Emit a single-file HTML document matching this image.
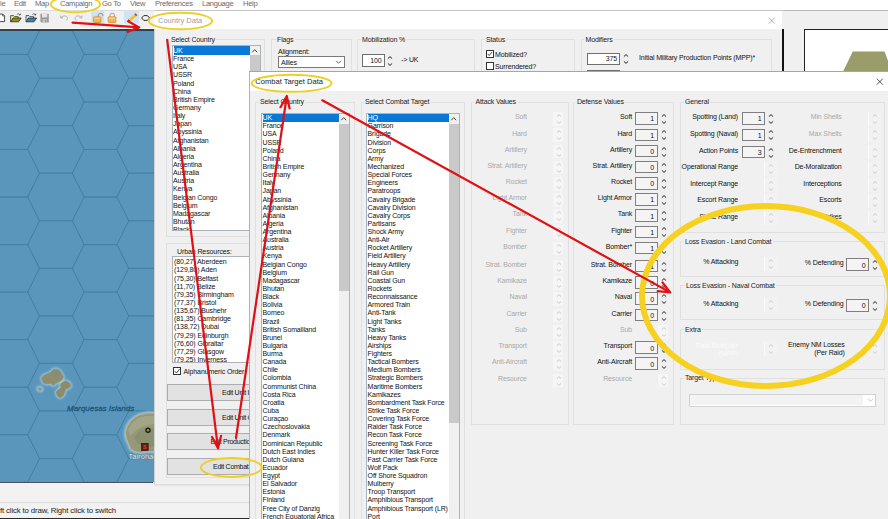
<!DOCTYPE html>
<html><head><meta charset="utf-8"><title>Editor</title>
<style>
html,body{margin:0;padding:0;}
body{width:888px;height:519px;overflow:hidden;position:relative;background:#fff;font-family:"Liberation Sans",sans-serif;font-size:7.0px;color:#111;letter-spacing:-0.14px;}
.b{position:absolute;box-sizing:border-box;}
.t{position:absolute;white-space:nowrap;line-height:10px;height:10px;}
.grp{border:1px solid #e0e0e0;box-shadow:0 0 0 0 #fff;}
.glab{background:#f0f0f0;padding:0 1.5px;color:#1a1a1a;}
.lb{background:#fff;border:1px solid #aeb3b9;}
.spin{background:#f4f4f4;border:1px solid #7f7f7f;}
.dis{color:#a9a9a9;}
.btn{background:#e2e2e2;border:1px solid #adadad;}
.menu{color:#6a6a6a;font-size:7.6px;letter-spacing:-0.3px;}
.urb{font-size:7px;letter-spacing:-0.1px;}
</style></head><body>

<span class="t menu" style="top:-0.80px;left:0.00px;">le</span>
<span class="t menu" style="top:-0.80px;left:14.00px;">Edit</span>
<span class="t menu" style="top:-0.80px;left:35.00px;">Map</span>
<span class="t menu" style="top:-0.80px;left:60.00px;">Campaign</span>
<span class="t menu" style="top:-0.80px;left:102.00px;">Go To</span>
<span class="t menu" style="top:-0.80px;left:130.00px;">View</span>
<span class="t menu" style="top:-0.80px;left:155.00px;">Preferences</span>
<span class="t menu" style="top:-0.80px;left:202.00px;">Language</span>
<span class="t menu" style="top:-0.80px;left:243.00px;">Help</span>
<div class="b " style="left:0.00px;top:10.00px;width:154.00px;height:19.40px;background:#f0f0f0;border-top:1px solid #dcdcdc;border-bottom:1px solid #fafafa"></div>
<svg class="b" style="left:0;top:10px" width="153" height="19" viewBox="0 10 153 19">
<rect x="91.3" y="11.2" width="13" height="12.3" fill="#cfe3f4"/><rect x="124" y="11.2" width="15" height="12.3" fill="#cfe3f4"/>
<path d="M-2 14 L2.6 14 L4.6 16 L4.6 21.6 L-2 21.6Z" fill="#fff" stroke="#222" stroke-width="0.8"/><path d="M2.6 14 L2.6 16 L4.6 16" fill="none" stroke="#222" stroke-width="0.6"/>
<path d="M10.6 21.8 L10.6 15.6 L13.6 15.6 L14.399999999999999 16.6 L18.2 16.6 L18.2 18" fill="#f0ea80" stroke="#222" stroke-width="0.7"/>
<path d="M10.6 21.8 L13.0 18 L21.2 18 L18.6 21.8Z" fill="#8f8f1c" stroke="#1a1a1a" stroke-width="0.7"/>
<path d="M16.8 14.6 C18.0 13.3 19.6 13.5 20.2 15 M20.5 13.6 L20.2 15.2 L18.799999999999997 14.8" fill="none" stroke="#333" stroke-width="0.6"/>
<path d="M26 21.8 L26 15.6 L29 15.6 L29.8 16.6 L33.6 16.6 L33.6 18" fill="#d8ebf5" stroke="#222" stroke-width="0.7"/>
<path d="M26 21.8 L28.4 18 L36.6 18 L34 21.8Z" fill="#4b7fa8" stroke="#1a1a1a" stroke-width="0.7"/>
<path d="M32.2 14.6 C33.4 13.3 35 13.5 35.6 15 M35.9 13.6 L35.6 15.2 L34.2 14.8" fill="none" stroke="#333" stroke-width="0.6"/>
<path d="M40.4 13.8 L48.8 13.8 L48.8 22.4 L41.4 22.4 L40.4 21.4Z" fill="#9b9b9b"/><rect x="42" y="13.8" width="5.2" height="3.6" fill="#e6e6e6"/><rect x="42.6" y="19.2" width="4.4" height="3.2" fill="#c9c9c9"/><rect x="45.2" y="19.8" width="1.1" height="2.2" fill="#8a8a8a"/>
<path d="M61 17.6 C63 15.4 66.4 15.4 67.4 17.6 C67.8 18.8 67.2 19.8 66 20.2 M60.6 15.6 L60.8 18 L63.2 17.8" fill="none" stroke="#a4a4a4" stroke-width="0.8"/>
<path d="M81.6 17.6 C79.6 15.4 76.2 15.4 75.2 17.6 C74.8 18.8 75.4 19.8 76.6 20.2 M82 15.6 L81.8 18 L79.4 17.8" fill="none" stroke="#a4a4a4" stroke-width="0.8"/>
<path d="M98.2 17 L98.2 15.4 C98.2 13 102.6 12.6 102.8 15.2 L102.8 16.2" fill="none" stroke="#9aa0a6" stroke-width="1.1"/>
<rect x="93.4" y="16.8" width="7.6" height="5.7" rx="0.8" fill="#f6b250" stroke="#d28a2c" stroke-width="0.7"/><rect x="94.2" y="17.6" width="6" height="1.6" fill="#fbd08a"/>
<path d="M110 17 L110 15.4 C110 12.6 114.4 12.6 114.4 15.4 L114.4 17" fill="none" stroke="#a9aeb3" stroke-width="1.1"/>
<rect x="108.1" y="16.8" width="7.8" height="5.7" rx="0.8" fill="#f6b250" stroke="#d28a2c" stroke-width="0.7"/><rect x="108.9" y="17.6" width="6.2" height="1.6" fill="#fbd08a"/>
<g transform="translate(127.7 21.6) rotate(-40)"><path d="M0 0 L2.4 -1.4 L2.4 1.4Z" fill="#3a2a1a"/><rect x="2.4" y="-1.4" width="7.4" height="2.8" fill="#f2b81e"/><rect x="2.4" y="-1.4" width="7.4" height="0.9" fill="#f8d660"/><rect x="9.8" y="-1.4" width="1.6" height="2.8" fill="#c23a28"/></g>
<path d="M141.6 18 L143.8 15.6 L147.4 15.6 L149.6 18 L147.4 20.4 L143.8 20.4Z" fill="none" stroke="#1a1a1a" stroke-width="0.9" stroke-linejoin="round"/>
</svg>
<svg class="b" style="left:0;top:30px" width="154" height="452" viewBox="0 30 154 452">
<defs><radialGradient id="sh" cx="50%" cy="50%" r="50%"><stop offset="55%" stop-color="#86b9cf" stop-opacity="0.9"/><stop offset="100%" stop-color="#5a95bb" stop-opacity="0"/></radialGradient><filter id="bl"><feGaussianBlur stdDeviation="1.2"/></filter><filter id="bl2"><feGaussianBlur stdDeviation="0.5"/></filter></defs>
<rect x="0" y="30" width="154" height="452" fill="#5a95bb"/>
<path d="M-61.5 6.9 L-49.7 -16.9 L-16.9 -16.9 L-5.1 6.9 L-16.9 30.6 L-49.7 30.6Z M-61.5 54.4 L-49.7 30.6 L-16.9 30.6 L-5.1 54.4 L-16.9 78.2 L-49.7 78.2Z M-61.5 101.9 L-49.7 78.2 L-16.9 78.2 L-5.1 101.9 L-16.9 125.7 L-49.7 125.7Z M-61.5 149.5 L-49.7 125.7 L-16.9 125.7 L-5.1 149.5 L-16.9 173.2 L-49.7 173.2Z M-61.5 197.0 L-49.7 173.2 L-16.9 173.2 L-5.1 197.0 L-16.9 220.8 L-49.7 220.8Z M-61.5 244.6 L-49.7 220.8 L-16.9 220.8 L-5.1 244.6 L-16.9 268.3 L-49.7 268.3Z M-61.5 292.1 L-49.7 268.3 L-16.9 268.3 L-5.1 292.1 L-16.9 315.9 L-49.7 315.9Z M-61.5 339.6 L-49.7 315.9 L-16.9 315.9 L-5.1 339.6 L-16.9 363.4 L-49.7 363.4Z M-61.5 387.2 L-49.7 363.4 L-16.9 363.4 L-5.1 387.2 L-16.9 410.9 L-49.7 410.9Z M-61.5 434.7 L-49.7 410.9 L-16.9 410.9 L-5.1 434.7 L-16.9 458.5 L-49.7 458.5Z M-61.5 482.3 L-49.7 458.5 L-16.9 458.5 L-5.1 482.3 L-16.9 506.0 L-49.7 506.0Z M-61.5 529.8 L-49.7 506.0 L-16.9 506.0 L-5.1 529.8 L-16.9 553.6 L-49.7 553.6Z M-16.9 30.6 L-5.1 6.9 L27.7 6.9 L39.5 30.6 L27.7 54.4 L-5.1 54.4Z M-16.9 78.2 L-5.1 54.4 L27.7 54.4 L39.5 78.2 L27.7 101.9 L-5.1 101.9Z M-16.9 125.7 L-5.1 101.9 L27.7 101.9 L39.5 125.7 L27.7 149.5 L-5.1 149.5Z M-16.9 173.2 L-5.1 149.5 L27.7 149.5 L39.5 173.2 L27.7 197.0 L-5.1 197.0Z M-16.9 220.8 L-5.1 197.0 L27.7 197.0 L39.5 220.8 L27.7 244.6 L-5.1 244.6Z M-16.9 268.3 L-5.1 244.6 L27.7 244.6 L39.5 268.3 L27.7 292.1 L-5.1 292.1Z M-16.9 315.9 L-5.1 292.1 L27.7 292.1 L39.5 315.9 L27.7 339.6 L-5.1 339.6Z M-16.9 363.4 L-5.1 339.6 L27.7 339.6 L39.5 363.4 L27.7 387.2 L-5.1 387.2Z M-16.9 410.9 L-5.1 387.2 L27.7 387.2 L39.5 410.9 L27.7 434.7 L-5.1 434.7Z M-16.9 458.5 L-5.1 434.7 L27.7 434.7 L39.5 458.5 L27.7 482.3 L-5.1 482.3Z M-16.9 506.0 L-5.1 482.3 L27.7 482.3 L39.5 506.0 L27.7 529.8 L-5.1 529.8Z M-16.9 553.6 L-5.1 529.8 L27.7 529.8 L39.5 553.6 L27.7 577.3 L-5.1 577.3Z M27.7 6.9 L39.5 -16.9 L72.3 -16.9 L84.1 6.9 L72.3 30.6 L39.5 30.6Z M27.7 54.4 L39.5 30.6 L72.3 30.6 L84.1 54.4 L72.3 78.2 L39.5 78.2Z M27.7 101.9 L39.5 78.2 L72.3 78.2 L84.1 101.9 L72.3 125.7 L39.5 125.7Z M27.7 149.5 L39.5 125.7 L72.3 125.7 L84.1 149.5 L72.3 173.2 L39.5 173.2Z M27.7 197.0 L39.5 173.2 L72.3 173.2 L84.1 197.0 L72.3 220.8 L39.5 220.8Z M27.7 244.6 L39.5 220.8 L72.3 220.8 L84.1 244.6 L72.3 268.3 L39.5 268.3Z M27.7 292.1 L39.5 268.3 L72.3 268.3 L84.1 292.1 L72.3 315.9 L39.5 315.9Z M27.7 339.6 L39.5 315.9 L72.3 315.9 L84.1 339.6 L72.3 363.4 L39.5 363.4Z M27.7 387.2 L39.5 363.4 L72.3 363.4 L84.1 387.2 L72.3 410.9 L39.5 410.9Z M27.7 434.7 L39.5 410.9 L72.3 410.9 L84.1 434.7 L72.3 458.5 L39.5 458.5Z M27.7 482.3 L39.5 458.5 L72.3 458.5 L84.1 482.3 L72.3 506.0 L39.5 506.0Z M27.7 529.8 L39.5 506.0 L72.3 506.0 L84.1 529.8 L72.3 553.6 L39.5 553.6Z M72.3 30.6 L84.1 6.9 L116.9 6.9 L128.7 30.6 L116.9 54.4 L84.1 54.4Z M72.3 78.2 L84.1 54.4 L116.9 54.4 L128.7 78.2 L116.9 101.9 L84.1 101.9Z M72.3 125.7 L84.1 101.9 L116.9 101.9 L128.7 125.7 L116.9 149.5 L84.1 149.5Z M72.3 173.2 L84.1 149.5 L116.9 149.5 L128.7 173.2 L116.9 197.0 L84.1 197.0Z M72.3 220.8 L84.1 197.0 L116.9 197.0 L128.7 220.8 L116.9 244.6 L84.1 244.6Z M72.3 268.3 L84.1 244.6 L116.9 244.6 L128.7 268.3 L116.9 292.1 L84.1 292.1Z M72.3 315.9 L84.1 292.1 L116.9 292.1 L128.7 315.9 L116.9 339.6 L84.1 339.6Z M72.3 363.4 L84.1 339.6 L116.9 339.6 L128.7 363.4 L116.9 387.2 L84.1 387.2Z M72.3 410.9 L84.1 387.2 L116.9 387.2 L128.7 410.9 L116.9 434.7 L84.1 434.7Z M72.3 458.5 L84.1 434.7 L116.9 434.7 L128.7 458.5 L116.9 482.3 L84.1 482.3Z M72.3 506.0 L84.1 482.3 L116.9 482.3 L128.7 506.0 L116.9 529.8 L84.1 529.8Z M72.3 553.6 L84.1 529.8 L116.9 529.8 L128.7 553.6 L116.9 577.3 L84.1 577.3Z M116.9 6.9 L128.7 -16.9 L161.5 -16.9 L173.3 6.9 L161.5 30.6 L128.7 30.6Z M116.9 54.4 L128.7 30.6 L161.5 30.6 L173.3 54.4 L161.5 78.2 L128.7 78.2Z M116.9 101.9 L128.7 78.2 L161.5 78.2 L173.3 101.9 L161.5 125.7 L128.7 125.7Z M116.9 149.5 L128.7 125.7 L161.5 125.7 L173.3 149.5 L161.5 173.2 L128.7 173.2Z M116.9 197.0 L128.7 173.2 L161.5 173.2 L173.3 197.0 L161.5 220.8 L128.7 220.8Z M116.9 244.6 L128.7 220.8 L161.5 220.8 L173.3 244.6 L161.5 268.3 L128.7 268.3Z M116.9 292.1 L128.7 268.3 L161.5 268.3 L173.3 292.1 L161.5 315.9 L128.7 315.9Z M116.9 339.6 L128.7 315.9 L161.5 315.9 L173.3 339.6 L161.5 363.4 L128.7 363.4Z M116.9 387.2 L128.7 363.4 L161.5 363.4 L173.3 387.2 L161.5 410.9 L128.7 410.9Z M116.9 434.7 L128.7 410.9 L161.5 410.9 L173.3 434.7 L161.5 458.5 L128.7 458.5Z M116.9 482.3 L128.7 458.5 L161.5 458.5 L173.3 482.3 L161.5 506.0 L128.7 506.0Z M116.9 529.8 L128.7 506.0 L161.5 506.0 L173.3 529.8 L161.5 553.6 L128.7 553.6Z M161.5 30.6 L173.3 6.9 L206.1 6.9 L217.9 30.6 L206.1 54.4 L173.3 54.4Z M161.5 78.2 L173.3 54.4 L206.1 54.4 L217.9 78.2 L206.1 101.9 L173.3 101.9Z M161.5 125.7 L173.3 101.9 L206.1 101.9 L217.9 125.7 L206.1 149.5 L173.3 149.5Z M161.5 173.2 L173.3 149.5 L206.1 149.5 L217.9 173.2 L206.1 197.0 L173.3 197.0Z M161.5 220.8 L173.3 197.0 L206.1 197.0 L217.9 220.8 L206.1 244.6 L173.3 244.6Z M161.5 268.3 L173.3 244.6 L206.1 244.6 L217.9 268.3 L206.1 292.1 L173.3 292.1Z M161.5 315.9 L173.3 292.1 L206.1 292.1 L217.9 315.9 L206.1 339.6 L173.3 339.6Z M161.5 363.4 L173.3 339.6 L206.1 339.6 L217.9 363.4 L206.1 387.2 L173.3 387.2Z M161.5 410.9 L173.3 387.2 L206.1 387.2 L217.9 410.9 L206.1 434.7 L173.3 434.7Z M161.5 458.5 L173.3 434.7 L206.1 434.7 L217.9 458.5 L206.1 482.3 L173.3 482.3Z M161.5 506.0 L173.3 482.3 L206.1 482.3 L217.9 506.0 L206.1 529.8 L173.3 529.8Z M161.5 553.6 L173.3 529.8 L206.1 529.8 L217.9 553.6 L206.1 577.3 L173.3 577.3Z" fill="none" stroke="#3d7ba4" stroke-width="0.55"/>
<g filter="url(#bl)" fill="#a9d3e2" stroke="#a9d3e2" stroke-width="3" stroke-linejoin="round" opacity="0.85"><path d="M41.5 378.3 L43.9 375.4 L47.7 373.8 L51.0 372.3 L53.2 369.6 L56.5 369.2 L59.4 370.5 L61.6 373.6 L63.4 377.1 L61.6 380.2 L58.1 382.0 L55.4 383.8 L53.2 385.6 L50.6 383.3 L47.0 383.8 L43.5 382.9Z"/><path d="M62.1 382.7 L65.4 381.1 L69.2 382.7 L70.9 386.0 L68.1 388.2 L65.6 388.7 L64.7 391.8 L63.0 395.8 L59.9 397.7 L57.2 395.3 L56.3 391.8 L58.5 389.6 L61.2 388.2 L60.5 385.1Z"/><path d="M37.7 388.2 L39.9 387.3 L42.1 388.7 L41.5 390.4 L38.8 390.4Z"/><path d="M156.2 413.0 L147.4 413.0 L140.7 414.4 L135.2 417.0 L130.3 421.4 L126.8 427.0 L125.4 432.5 L126.3 438.7 L128.5 443.6 L130.7 449.1 L135.2 451.6 L140.7 452.5 L147.4 451.6 L156.2 451.6Z"/></g>
<g filter="url(#bl2)" stroke-linejoin="round"><path d="M41.5 378.3 L43.9 375.4 L47.7 373.8 L51.0 372.3 L53.2 369.6 L56.5 369.2 L59.4 370.5 L61.6 373.6 L63.4 377.1 L61.6 380.2 L58.1 382.0 L55.4 383.8 L53.2 385.6 L50.6 383.3 L47.0 383.8 L43.5 382.9Z" fill="#8f8e6b" stroke="#8f8e6b" stroke-width="0.8"/><path d="M62.1 382.7 L65.4 381.1 L69.2 382.7 L70.9 386.0 L68.1 388.2 L65.6 388.7 L64.7 391.8 L63.0 395.8 L59.9 397.7 L57.2 395.3 L56.3 391.8 L58.5 389.6 L61.2 388.2 L60.5 385.1Z" fill="#8f8a68" stroke="#8f8a68" stroke-width="0.8"/><path d="M37.7 388.2 L39.9 387.3 L42.1 388.7 L41.5 390.4 L38.8 390.4Z" fill="#96946f"/>
<path d="M52 371 L57 370 L60 374 L58 378 L53 377Z" fill="#7f8a82" opacity="0.6"/>
<path d="M156.2 413.0 L147.4 413.0 L140.7 414.4 L135.2 417.0 L130.3 421.4 L126.8 427.0 L125.4 432.5 L126.3 438.7 L128.5 443.6 L130.7 449.1 L135.2 451.6 L140.7 452.5 L147.4 451.6 L156.2 451.6Z" fill="#97987a" stroke="#b4b59a" stroke-width="1"/><path d="M131 424 L138 418 L146 416 L154 416 L154 424 L144 426 L136 430 L130 436 L128 430Z" fill="#a9aa8c" opacity="0.7"/><path d="M138 432 L146 428 L154 428 L154 446 L146 448 L138 444 L134 438Z" fill="#7d8a66" opacity="0.5"/></g>
<circle cx="148" cy="430.3" r="2.7" fill="#1a1a12"/><circle cx="148" cy="430.3" r="1.3" fill="#a8903a"/>
<rect x="141.4" y="443.4" width="6.8" height="7.2" fill="#5e1a16" stroke="#2f0c0a" stroke-width="0.6"/><text x="144.8" y="449.2" font-size="5.4" fill="#e2483a" text-anchor="middle" font-family="Liberation Sans" font-weight="bold" letter-spacing="0">S</text>
<text x="128.4" y="459" font-size="7.4" fill="#eef2f3" stroke="#46545c" stroke-width="0.4" paint-order="stroke" font-family="Liberation Sans" letter-spacing="0.1">Tairohae</text>
<text x="67" y="411" font-size="8" font-style="italic" fill="#1b587a" stroke="#1b587a" stroke-width="0.3" font-family="Liberation Sans" letter-spacing="0">Marquesas Islands</text>
</svg>
<div class="b " style="left:0.00px;top:29.20px;width:154.00px;height:1.60px;background:#34414d"></div>
<div class="b " style="left:0.00px;top:481.60px;width:153.00px;height:1.40px;background:#4a5560"></div>
<div class="b " style="left:0.00px;top:483.00px;width:260.00px;height:19.50px;background:#f2f2f2"></div>
<div class="b " style="left:0.00px;top:502.00px;width:260.00px;height:17.00px;background:#f2f2f2;border-top:1px solid #dddddd"></div>
<div class="b " style="left:0.00px;top:517.80px;width:249.00px;height:1.20px;background:#2a2a2a"></div>
<div class="b " style="left:153.70px;top:484.00px;width:95.30px;height:3.00px;background:linear-gradient(#d9d9d9,#f2f2f2)"></div>
<span class="t " style="top:505.60px;left:0.00px;font-size:7.8px;color:#222;">ft click to draw, Right click to switch</span>
<div class="b " style="left:782.00px;top:10.00px;width:106.00px;height:62.00px;background:#f0f0f0;border-top:1px solid #b9b9b9"></div>
<div class="b " style="left:804.00px;top:28.50px;width:96.00px;height:51.50px;background:#fff;border:1.2px solid #222"></div>
<svg class="b" style="left:840px;top:50px" width="48" height="22" viewBox="840 50 48 22"><path d="M852.8 51.4 L884.6 51.4 L892 72 L842.8 72Z" fill="#9a9c69"/></svg>
<div class="b " style="left:153.70px;top:10.00px;width:629.30px;height:474.00px;background:#f0f0f0;border-top:1px solid #c4c4c4;border-left:1px solid #d0d0d0"></div>
<div class="b " style="left:154.40px;top:11.00px;width:627.60px;height:18.40px;background:#fff"></div>
<div class="b " style="left:782.00px;top:29.40px;width:2.00px;height:42.60px;background:#111"></div>
<span class="t " style="top:15.90px;left:158.00px;font-size:7.5px;color:#9d9d9d;letter-spacing:0;">Country Data</span>
<svg class="b" style="left:767px;top:16px" width="10" height="10" viewBox="0 0 10 10"><path d="M1.8 1.6 L7.8 7.6 M7.8 1.6 L1.8 7.6" stroke="#9a9a9a" stroke-width="0.8" fill="none"/></svg>
<div class="b grp" style="left:166.00px;top:39.40px;width:98.50px;height:197.60px;"></div>
<span class="t glab" style="left:169.50px;top:35.20px;">Select Country</span>
<div class="b lb" style="left:171.50px;top:45.00px;width:89.00px;height:185.50px;"></div>
<div class="b" style="left:172.50px;top:46.00px;width:87.00px;height:183.50px;overflow:hidden">
<div class="b" style="left:1px;top:0.42px;width:76.50px;height:8.15px;background:#0a78d6"></div>
<span class="t " style="left:0.6px;top:-0.10px;color:#fff;">UK</span>
<span class="t " style="left:0.6px;top:8.05px;">France</span>
<span class="t " style="left:0.6px;top:16.20px;">USA</span>
<span class="t " style="left:0.6px;top:24.35px;">USSR</span>
<span class="t " style="left:0.6px;top:32.50px;">Poland</span>
<span class="t " style="left:0.6px;top:40.65px;">China</span>
<span class="t " style="left:0.6px;top:48.80px;">British Empire</span>
<span class="t " style="left:0.6px;top:56.95px;">Germany</span>
<span class="t " style="left:0.6px;top:65.10px;">Italy</span>
<span class="t " style="left:0.6px;top:73.25px;">Japan</span>
<span class="t " style="left:0.6px;top:81.40px;">Abyssinia</span>
<span class="t " style="left:0.6px;top:89.55px;">Afghanistan</span>
<span class="t " style="left:0.6px;top:97.70px;">Albania</span>
<span class="t " style="left:0.6px;top:105.85px;">Algeria</span>
<span class="t " style="left:0.6px;top:114.00px;">Argentina</span>
<span class="t " style="left:0.6px;top:122.15px;">Australia</span>
<span class="t " style="left:0.6px;top:130.30px;">Austria</span>
<span class="t " style="left:0.6px;top:138.45px;">Kenya</span>
<span class="t " style="left:0.6px;top:146.60px;">Belgian Congo</span>
<span class="t " style="left:0.6px;top:154.75px;">Belgium</span>
<span class="t " style="left:0.6px;top:162.90px;">Madagascar</span>
<span class="t " style="left:0.6px;top:171.05px;">Bhutan</span>
<span class="t " style="left:0.6px;top:179.20px;">Black</span>
</div>
<div class="b " style="left:250.00px;top:46.00px;width:9.50px;height:183.50px;background:#f0f0f0"></div>
<div class="b " style="left:250.00px;top:54.50px;width:9.50px;height:25.50px;background:#c9c9c9"></div>
<svg class="b" style="left:250.00px;top:46.00px" width="9.5" height="10" viewBox="0 0 9.5 10"><path d="M2.35 6.2 L4.75 3.6 L7.15 6.2" fill="none" stroke="#444" stroke-width="1"/></svg>
<div class="b grp" style="left:271.00px;top:39.40px;width:80.50px;height:80.60px;"></div>
<span class="t glab" style="left:275.50px;top:35.20px;">Flags</span>
<span class="t " style="top:47.20px;left:278.00px;">Alignment:</span>
<div class="b " style="left:277.50px;top:56.00px;width:67.50px;height:12.30px;background:#fff;border:1px solid #7a7a7a"></div>
<span class="t " style="top:57.80px;left:281.00px;">Allies</span>
<svg class="b" style="left:334px;top:58px" width="9" height="8" viewBox="0 0 9 8"><path d="M2 2.8 L4.5 5.3 L7 2.8" fill="none" stroke="#444" stroke-width="0.8"/></svg>
<div class="b grp" style="left:357.00px;top:39.40px;width:117.50px;height:80.60px;"></div>
<span class="t glab" style="left:360.50px;top:35.20px;">Mobilization %</span>
<div class="b " style="left:362.00px;top:54.00px;width:22.50px;height:12.70px;background:#fff;border:1px solid #6e6e6e"></div>
<span class="t " style="top:56.10px;right:506.50px;">100</span>
<svg class="b" style="left:384.50px;top:53.50px" width="10" height="14" viewBox="-5 -7 10 14"><path d="M-2.1 -2.4 L0 -4.4 L2.1 -2.4 M-2.1 2.4 L0 4.4 L2.1 2.4" fill="none" stroke="#222" stroke-width="1.0" stroke-linejoin="round"/></svg>
<span class="t " style="top:54.60px;left:401.00px;">-&gt; UK</span>
<div class="b grp" style="left:480.50px;top:39.40px;width:94.50px;height:80.60px;"></div>
<span class="t glab" style="left:484.50px;top:35.20px;">Status</span>
<div class="b " style="left:486.00px;top:50.20px;width:7.60px;height:7.60px;background:#fff;border:1px solid #333"></div>
<svg class="b" style="left:486px;top:50.2px" width="7.6" height="7.6" viewBox="0 0 8 8"><path d="M1.7 4.1 L3.3 5.8 L6.4 2.2" fill="none" stroke="#222" stroke-width="0.9"/></svg>
<span class="t " style="top:49.60px;left:495.00px;">Mobilized?</span>
<div class="b " style="left:486.00px;top:62.20px;width:7.60px;height:7.60px;background:#fff;border:1px solid #333"></div>
<span class="t " style="top:62.00px;left:495.00px;">Surrendered?</span>
<div class="b grp" style="left:581.00px;top:39.40px;width:191.00px;height:80.60px;"></div>
<span class="t glab" style="left:584.00px;top:35.20px;">Modifiers</span>
<div class="b " style="left:587.00px;top:52.50px;width:33.00px;height:12.00px;background:#fff;border:1px solid #6e6e6e"></div>
<span class="t " style="top:54.20px;right:271.00px;">375</span>
<svg class="b" style="left:620.50px;top:51.50px" width="10" height="14" viewBox="-5 -7 10 14"><path d="M-2.1 -2.4 L0 -4.4 L2.1 -2.4 M-2.1 2.4 L0 4.4 L2.1 2.4" fill="none" stroke="#222" stroke-width="1.0" stroke-linejoin="round"/></svg>
<span class="t " style="top:53.40px;left:639.00px;">Initial Military Production Points (MPP)*</span>
<div class="b " style="left:587.00px;top:69.50px;width:33.00px;height:2.50px;background:#fff;border:1px solid #6e6e6e"></div>
<div class="b grp" style="left:166.00px;top:242.80px;width:98.50px;height:235.20px;"></div>
<span class="t urb" style="top:246.60px;left:177.00px;">Urban Resources:</span>
<div class="b lb" style="left:171.50px;top:256.00px;width:92.50px;height:106.80px;"></div>
<div class="b" style="left:172.50px;top:257.00px;width:90.50px;height:104.80px;overflow:hidden">
<span class="t urb" style="left:1.6px;top:0.20px;">(80,27) Aberdeen</span>
<span class="t urb" style="left:1.6px;top:8.35px;">(129,80) Aden</span>
<span class="t urb" style="left:1.6px;top:16.50px;">(75,30) Belfast</span>
<span class="t urb" style="left:1.6px;top:24.65px;">(11,70) Belize</span>
<span class="t urb" style="left:1.6px;top:32.80px;">(79,35) Birmingham</span>
<span class="t urb" style="left:1.6px;top:40.95px;">(77,37) Bristol</span>
<span class="t urb" style="left:1.6px;top:49.10px;">(135,67) Bushehr</span>
<span class="t urb" style="left:1.6px;top:57.25px;">(81,35) Cambridge</span>
<span class="t urb" style="left:1.6px;top:65.40px;">(138,72) Dubai</span>
<span class="t urb" style="left:1.6px;top:73.55px;">(79,29) Edinburgh</span>
<span class="t urb" style="left:1.6px;top:81.70px;">(76,60) Gibraltar</span>
<span class="t urb" style="left:1.6px;top:89.85px;">(77,29) Glasgow</span>
<span class="t urb" style="left:1.6px;top:98.00px;">(79,25) Inverness</span>
</div>
<div class="b " style="left:173.00px;top:367.00px;width:8.20px;height:8.20px;background:#fff;border:1px solid #333"></div>
<svg class="b" style="left:173px;top:367px" width="8.2" height="8.2" viewBox="0 0 8 8"><path d="M1.7 4.1 L3.3 5.8 L6.4 2.2" fill="none" stroke="#222" stroke-width="0.9"/></svg>
<span class="t urb" style="top:366.80px;left:183.50px;">Alphanumeric Order</span>
<div class="b btn" style="left:167.00px;top:384.30px;width:133.00px;height:17.20px;"></div>
<span class="t urb" style="top:388.30px;left:222.00px;letter-spacing:-0.28px;">Edit Unit I</span>
<div class="b btn" style="left:167.00px;top:408.80px;width:133.00px;height:17.20px;"></div>
<span class="t urb" style="top:412.80px;left:222.00px;letter-spacing:-0.28px;">Edit Unit C</span>
<div class="b btn" style="left:167.00px;top:433.20px;width:133.00px;height:17.20px;"></div>
<span class="t urb" style="top:437.20px;left:210.40px;letter-spacing:-0.28px;">Edit Production</span>
<div class="b btn" style="left:167.00px;top:457.80px;width:133.00px;height:17.20px;"></div>
<span class="t urb" style="top:461.80px;left:213.00px;letter-spacing:-0.28px;">Edit Combat</span>
<div class="b " style="left:248.50px;top:71.00px;width:639.50px;height:448.00px;background:#f0f0f0;border-top:1px solid #7fb0dc;border-left:1px solid #8fbbe0"></div>
<div class="b " style="left:249.50px;top:72.00px;width:638.50px;height:19.00px;background:#fff"></div>
<span class="t " style="top:76.60px;left:255.20px;font-size:7.6px;color:#1a1a1a;letter-spacing:0;">Combat Target Data</span>
<svg class="b" style="left:875px;top:77px" width="10" height="10" viewBox="0 0 10 10"><path d="M1.8 1.6 L7.9 7.7 M7.9 1.6 L1.8 7.7" stroke="#333" stroke-width="0.85" fill="none"/></svg>
<div class="b grp" style="left:255.00px;top:101.60px;width:100.40px;height:428.40px;"></div>
<span class="t glab" style="left:258.50px;top:97.40px;">Select Country</span>
<div class="b lb" style="left:261.00px;top:112.80px;width:88.70px;height:417.20px;"></div>
<div class="b" style="left:262.00px;top:113.80px;width:86.70px;height:415.20px;overflow:hidden">
<div class="b" style="left:1px;top:-0.07px;width:76.20px;height:8.13px;background:#0a78d6"></div>
<span class="t " style="left:0.6px;top:-0.60px;color:#fff;">UK</span>
<span class="t " style="left:0.6px;top:7.53px;">France</span>
<span class="t " style="left:0.6px;top:15.67px;">USA</span>
<span class="t " style="left:0.6px;top:23.80px;">USSR</span>
<span class="t " style="left:0.6px;top:31.93px;">Poland</span>
<span class="t " style="left:0.6px;top:40.06px;">China</span>
<span class="t " style="left:0.6px;top:48.20px;">British Empire</span>
<span class="t " style="left:0.6px;top:56.33px;">Germany</span>
<span class="t " style="left:0.6px;top:64.46px;">Italy</span>
<span class="t " style="left:0.6px;top:72.60px;">Japan</span>
<span class="t " style="left:0.6px;top:80.73px;">Abyssinia</span>
<span class="t " style="left:0.6px;top:88.86px;">Afghanistan</span>
<span class="t " style="left:0.6px;top:97.00px;">Albania</span>
<span class="t " style="left:0.6px;top:105.13px;">Algeria</span>
<span class="t " style="left:0.6px;top:113.26px;">Argentina</span>
<span class="t " style="left:0.6px;top:121.39px;">Australia</span>
<span class="t " style="left:0.6px;top:129.53px;">Austria</span>
<span class="t " style="left:0.6px;top:137.66px;">Kenya</span>
<span class="t " style="left:0.6px;top:145.79px;">Belgian Congo</span>
<span class="t " style="left:0.6px;top:153.93px;">Belgium</span>
<span class="t " style="left:0.6px;top:162.06px;">Madagascar</span>
<span class="t " style="left:0.6px;top:170.19px;">Bhutan</span>
<span class="t " style="left:0.6px;top:178.33px;">Black</span>
<span class="t " style="left:0.6px;top:186.46px;">Bolivia</span>
<span class="t " style="left:0.6px;top:194.59px;">Borneo</span>
<span class="t " style="left:0.6px;top:202.72px;">Brazil</span>
<span class="t " style="left:0.6px;top:210.86px;">British Somaliland</span>
<span class="t " style="left:0.6px;top:218.99px;">Brunei</span>
<span class="t " style="left:0.6px;top:227.12px;">Bulgaria</span>
<span class="t " style="left:0.6px;top:235.26px;">Burma</span>
<span class="t " style="left:0.6px;top:243.39px;">Canada</span>
<span class="t " style="left:0.6px;top:251.52px;">Chile</span>
<span class="t " style="left:0.6px;top:259.66px;">Colombia</span>
<span class="t " style="left:0.6px;top:267.79px;">Communist China</span>
<span class="t " style="left:0.6px;top:275.92px;">Costa Rica</span>
<span class="t " style="left:0.6px;top:284.06px;">Croatia</span>
<span class="t " style="left:0.6px;top:292.19px;">Cuba</span>
<span class="t " style="left:0.6px;top:300.32px;">Curaçao</span>
<span class="t " style="left:0.6px;top:308.45px;">Czechoslovakia</span>
<span class="t " style="left:0.6px;top:316.59px;">Denmark</span>
<span class="t " style="left:0.6px;top:324.72px;">Dominican Republic</span>
<span class="t " style="left:0.6px;top:332.85px;">Dutch East Indies</span>
<span class="t " style="left:0.6px;top:340.99px;">Dutch Guiana</span>
<span class="t " style="left:0.6px;top:349.12px;">Ecuador</span>
<span class="t " style="left:0.6px;top:357.25px;">Egypt</span>
<span class="t " style="left:0.6px;top:365.38px;">El Salvador</span>
<span class="t " style="left:0.6px;top:373.52px;">Estonia</span>
<span class="t " style="left:0.6px;top:381.65px;">Finland</span>
<span class="t " style="left:0.6px;top:389.78px;">Free City of Danzig</span>
<span class="t " style="left:0.6px;top:397.92px;">French Equatorial Africa</span>
</div>
<div class="b " style="left:339.20px;top:113.80px;width:9.50px;height:415.20px;background:#f0f0f0"></div>
<div class="b " style="left:339.20px;top:124.40px;width:9.50px;height:166.60px;background:#c9c9c9"></div>
<svg class="b" style="left:339.20px;top:113.80px" width="9.5" height="10" viewBox="0 0 9.5 10"><path d="M2.35 6.2 L4.75 3.6 L7.15 6.2" fill="none" stroke="#444" stroke-width="1"/></svg>
<div class="b grp" style="left:360.80px;top:101.60px;width:104.20px;height:428.40px;"></div>
<span class="t glab" style="left:363.50px;top:97.40px;">Select Combat Target</span>
<div class="b lb" style="left:366.00px;top:112.80px;width:93.50px;height:417.20px;"></div>
<div class="b" style="left:367.00px;top:113.80px;width:91.50px;height:415.20px;overflow:hidden">
<div class="b" style="left:1px;top:-0.07px;width:81.00px;height:8.13px;background:#0a78d6"></div>
<span class="t " style="left:0.6px;top:-0.60px;color:#fff;">HQ</span>
<span class="t " style="left:0.6px;top:7.53px;">Garrison</span>
<span class="t " style="left:0.6px;top:15.67px;">Brigade</span>
<span class="t " style="left:0.6px;top:23.80px;">Division</span>
<span class="t " style="left:0.6px;top:31.93px;">Corps</span>
<span class="t " style="left:0.6px;top:40.06px;">Army</span>
<span class="t " style="left:0.6px;top:48.20px;">Mechanized</span>
<span class="t " style="left:0.6px;top:56.33px;">Special Forces</span>
<span class="t " style="left:0.6px;top:64.46px;">Engineers</span>
<span class="t " style="left:0.6px;top:72.60px;">Paratroops</span>
<span class="t " style="left:0.6px;top:80.73px;">Cavalry Brigade</span>
<span class="t " style="left:0.6px;top:88.86px;">Cavalry Division</span>
<span class="t " style="left:0.6px;top:97.00px;">Cavalry Corps</span>
<span class="t " style="left:0.6px;top:105.13px;">Partisans</span>
<span class="t " style="left:0.6px;top:113.26px;">Shock Army</span>
<span class="t " style="left:0.6px;top:121.39px;">Anti-Air</span>
<span class="t " style="left:0.6px;top:129.53px;">Rocket Artillery</span>
<span class="t " style="left:0.6px;top:137.66px;">Field Artillery</span>
<span class="t " style="left:0.6px;top:145.79px;">Heavy Artillery</span>
<span class="t " style="left:0.6px;top:153.93px;">Rail Gun</span>
<span class="t " style="left:0.6px;top:162.06px;">Coastal Gun</span>
<span class="t " style="left:0.6px;top:170.19px;">Rockets</span>
<span class="t " style="left:0.6px;top:178.33px;">Reconnaissance</span>
<span class="t " style="left:0.6px;top:186.46px;">Armored Train</span>
<span class="t " style="left:0.6px;top:194.59px;">Anti-Tank</span>
<span class="t " style="left:0.6px;top:202.72px;">Light Tanks</span>
<span class="t " style="left:0.6px;top:210.86px;">Tanks</span>
<span class="t " style="left:0.6px;top:218.99px;">Heavy Tanks</span>
<span class="t " style="left:0.6px;top:227.12px;">Airships</span>
<span class="t " style="left:0.6px;top:235.26px;">Fighters</span>
<span class="t " style="left:0.6px;top:243.39px;">Tactical Bombers</span>
<span class="t " style="left:0.6px;top:251.52px;">Medium Bombers</span>
<span class="t " style="left:0.6px;top:259.66px;">Strategic Bombers</span>
<span class="t " style="left:0.6px;top:267.79px;">Maritime Bombers</span>
<span class="t " style="left:0.6px;top:275.92px;">Kamikazes</span>
<span class="t " style="left:0.6px;top:284.06px;">Bombardment Task Force</span>
<span class="t " style="left:0.6px;top:292.19px;">Strike Task Force</span>
<span class="t " style="left:0.6px;top:300.32px;">Covering Task Force</span>
<span class="t " style="left:0.6px;top:308.45px;">Raider Task Force</span>
<span class="t " style="left:0.6px;top:316.59px;">Recon Task Force</span>
<span class="t " style="left:0.6px;top:324.72px;">Screening Task Force</span>
<span class="t " style="left:0.6px;top:332.85px;">Hunter Killer Task Force</span>
<span class="t " style="left:0.6px;top:340.99px;">Fast Carrier Task Force</span>
<span class="t " style="left:0.6px;top:349.12px;">Wolf Pack</span>
<span class="t " style="left:0.6px;top:357.25px;">Off Shore Squadron</span>
<span class="t " style="left:0.6px;top:365.38px;">Mulberry</span>
<span class="t " style="left:0.6px;top:373.52px;">Troop Transport</span>
<span class="t " style="left:0.6px;top:381.65px;">Amphibious Transport</span>
<span class="t " style="left:0.6px;top:389.78px;">Amphibious Transport (LR)</span>
<span class="t " style="left:0.6px;top:397.92px;">Port</span>
</div>
<div class="b " style="left:449.00px;top:113.80px;width:9.50px;height:415.20px;background:#f0f0f0"></div>
<div class="b " style="left:449.00px;top:124.40px;width:9.50px;height:298.60px;background:#c9c9c9"></div>
<svg class="b" style="left:449.00px;top:113.80px" width="9.5" height="10" viewBox="0 0 9.5 10"><path d="M2.35 6.2 L4.75 3.6 L7.15 6.2" fill="none" stroke="#444" stroke-width="1"/></svg>
<div class="b grp" style="left:470.60px;top:101.60px;width:98.00px;height:323.00px;"></div>
<span class="t glab" style="left:474.00px;top:97.40px;">Attack Values</span>
<div class="b grp" style="left:572.80px;top:101.60px;width:101.60px;height:323.00px;"></div>
<span class="t glab" style="left:575.40px;top:97.40px;">Defense Values</span>
<span class="t dis" style="top:112.00px;right:361.20px;">Soft</span>
<div class="b " style="left:553.20px;top:111.80px;width:10.20px;height:13.80px;background:#f6f6f6"></div>
<svg class="b" style="left:553.50px;top:111.80px" width="10" height="14" viewBox="-5 -7 10 14"><path d="M-2.1 -2.4 L0 -4.4 L2.1 -2.4 M-2.1 2.4 L0 4.4 L2.1 2.4" fill="none" stroke="#bebebe" stroke-width="0.8" stroke-linejoin="round"/></svg>
<span class="t " style="top:112.00px;right:256.00px;">Soft</span>
<div class="b spin" style="left:635.40px;top:112.00px;width:22.20px;height:12.60px;"></div>
<span class="t " style="top:114.30px;right:234.00px;">1</span>
<svg class="b" style="left:658.50px;top:111.80px" width="10" height="14" viewBox="-5 -7 10 14"><path d="M-2.1 -2.4 L0 -4.4 L2.1 -2.4 M-2.1 2.4 L0 4.4 L2.1 2.4" fill="none" stroke="#222" stroke-width="1.0" stroke-linejoin="round"/></svg>
<span class="t dis" style="top:128.50px;right:361.20px;">Hard</span>
<div class="b " style="left:553.20px;top:128.30px;width:10.20px;height:13.80px;background:#f6f6f6"></div>
<svg class="b" style="left:553.50px;top:128.30px" width="10" height="14" viewBox="-5 -7 10 14"><path d="M-2.1 -2.4 L0 -4.4 L2.1 -2.4 M-2.1 2.4 L0 4.4 L2.1 2.4" fill="none" stroke="#bebebe" stroke-width="0.8" stroke-linejoin="round"/></svg>
<span class="t " style="top:128.50px;right:256.00px;">Hard</span>
<div class="b spin" style="left:635.40px;top:128.50px;width:22.20px;height:12.60px;"></div>
<span class="t " style="top:130.80px;right:234.00px;">1</span>
<svg class="b" style="left:658.50px;top:128.30px" width="10" height="14" viewBox="-5 -7 10 14"><path d="M-2.1 -2.4 L0 -4.4 L2.1 -2.4 M-2.1 2.4 L0 4.4 L2.1 2.4" fill="none" stroke="#222" stroke-width="1.0" stroke-linejoin="round"/></svg>
<span class="t dis" style="top:144.70px;right:361.20px;">Artillery</span>
<div class="b " style="left:553.20px;top:144.50px;width:10.20px;height:13.80px;background:#f6f6f6"></div>
<svg class="b" style="left:553.50px;top:144.50px" width="10" height="14" viewBox="-5 -7 10 14"><path d="M-2.1 -2.4 L0 -4.4 L2.1 -2.4 M-2.1 2.4 L0 4.4 L2.1 2.4" fill="none" stroke="#bebebe" stroke-width="0.8" stroke-linejoin="round"/></svg>
<span class="t " style="top:144.70px;right:256.00px;">Artillery</span>
<div class="b spin" style="left:635.40px;top:144.70px;width:22.20px;height:12.60px;"></div>
<span class="t " style="top:147.00px;right:234.00px;">0</span>
<svg class="b" style="left:658.50px;top:144.50px" width="10" height="14" viewBox="-5 -7 10 14"><path d="M-2.1 -2.4 L0 -4.4 L2.1 -2.4 M-2.1 2.4 L0 4.4 L2.1 2.4" fill="none" stroke="#222" stroke-width="1.0" stroke-linejoin="round"/></svg>
<span class="t dis" style="top:160.90px;right:361.20px;">Strat. Artillery</span>
<div class="b " style="left:553.20px;top:160.70px;width:10.20px;height:13.80px;background:#f6f6f6"></div>
<svg class="b" style="left:553.50px;top:160.70px" width="10" height="14" viewBox="-5 -7 10 14"><path d="M-2.1 -2.4 L0 -4.4 L2.1 -2.4 M-2.1 2.4 L0 4.4 L2.1 2.4" fill="none" stroke="#bebebe" stroke-width="0.8" stroke-linejoin="round"/></svg>
<span class="t " style="top:160.90px;right:256.00px;">Strat. Artillery</span>
<div class="b spin" style="left:635.40px;top:160.90px;width:22.20px;height:12.60px;"></div>
<span class="t " style="top:163.20px;right:234.00px;">0</span>
<svg class="b" style="left:658.50px;top:160.70px" width="10" height="14" viewBox="-5 -7 10 14"><path d="M-2.1 -2.4 L0 -4.4 L2.1 -2.4 M-2.1 2.4 L0 4.4 L2.1 2.4" fill="none" stroke="#222" stroke-width="1.0" stroke-linejoin="round"/></svg>
<span class="t dis" style="top:177.00px;right:361.20px;">Rocket</span>
<div class="b " style="left:553.20px;top:176.80px;width:10.20px;height:13.80px;background:#f6f6f6"></div>
<svg class="b" style="left:553.50px;top:176.80px" width="10" height="14" viewBox="-5 -7 10 14"><path d="M-2.1 -2.4 L0 -4.4 L2.1 -2.4 M-2.1 2.4 L0 4.4 L2.1 2.4" fill="none" stroke="#bebebe" stroke-width="0.8" stroke-linejoin="round"/></svg>
<span class="t " style="top:177.00px;right:256.00px;">Rocket</span>
<div class="b spin" style="left:635.40px;top:177.00px;width:22.20px;height:12.60px;"></div>
<span class="t " style="top:179.30px;right:234.00px;">0</span>
<svg class="b" style="left:658.50px;top:176.80px" width="10" height="14" viewBox="-5 -7 10 14"><path d="M-2.1 -2.4 L0 -4.4 L2.1 -2.4 M-2.1 2.4 L0 4.4 L2.1 2.4" fill="none" stroke="#222" stroke-width="1.0" stroke-linejoin="round"/></svg>
<span class="t dis" style="top:193.10px;right:361.20px;">Light Armor</span>
<div class="b " style="left:553.20px;top:192.90px;width:10.20px;height:13.80px;background:#f6f6f6"></div>
<svg class="b" style="left:553.50px;top:192.90px" width="10" height="14" viewBox="-5 -7 10 14"><path d="M-2.1 -2.4 L0 -4.4 L2.1 -2.4 M-2.1 2.4 L0 4.4 L2.1 2.4" fill="none" stroke="#bebebe" stroke-width="0.8" stroke-linejoin="round"/></svg>
<span class="t " style="top:193.10px;right:256.00px;">Light Armor</span>
<div class="b spin" style="left:635.40px;top:193.10px;width:22.20px;height:12.60px;"></div>
<span class="t " style="top:195.40px;right:234.00px;">1</span>
<svg class="b" style="left:658.50px;top:192.90px" width="10" height="14" viewBox="-5 -7 10 14"><path d="M-2.1 -2.4 L0 -4.4 L2.1 -2.4 M-2.1 2.4 L0 4.4 L2.1 2.4" fill="none" stroke="#222" stroke-width="1.0" stroke-linejoin="round"/></svg>
<span class="t dis" style="top:209.30px;right:361.20px;">Tank</span>
<div class="b " style="left:553.20px;top:209.10px;width:10.20px;height:13.80px;background:#f6f6f6"></div>
<svg class="b" style="left:553.50px;top:209.10px" width="10" height="14" viewBox="-5 -7 10 14"><path d="M-2.1 -2.4 L0 -4.4 L2.1 -2.4 M-2.1 2.4 L0 4.4 L2.1 2.4" fill="none" stroke="#bebebe" stroke-width="0.8" stroke-linejoin="round"/></svg>
<span class="t " style="top:209.30px;right:256.00px;">Tank</span>
<div class="b spin" style="left:635.40px;top:209.30px;width:22.20px;height:12.60px;"></div>
<span class="t " style="top:211.60px;right:234.00px;">1</span>
<svg class="b" style="left:658.50px;top:209.10px" width="10" height="14" viewBox="-5 -7 10 14"><path d="M-2.1 -2.4 L0 -4.4 L2.1 -2.4 M-2.1 2.4 L0 4.4 L2.1 2.4" fill="none" stroke="#222" stroke-width="1.0" stroke-linejoin="round"/></svg>
<span class="t dis" style="top:225.60px;right:361.20px;">Fighter</span>
<div class="b " style="left:553.20px;top:225.40px;width:10.20px;height:13.80px;background:#f6f6f6"></div>
<svg class="b" style="left:553.50px;top:225.40px" width="10" height="14" viewBox="-5 -7 10 14"><path d="M-2.1 -2.4 L0 -4.4 L2.1 -2.4 M-2.1 2.4 L0 4.4 L2.1 2.4" fill="none" stroke="#bebebe" stroke-width="0.8" stroke-linejoin="round"/></svg>
<span class="t " style="top:225.60px;right:256.00px;">Fighter</span>
<div class="b spin" style="left:635.40px;top:225.60px;width:22.20px;height:12.60px;"></div>
<span class="t " style="top:227.90px;right:234.00px;">1</span>
<svg class="b" style="left:658.50px;top:225.40px" width="10" height="14" viewBox="-5 -7 10 14"><path d="M-2.1 -2.4 L0 -4.4 L2.1 -2.4 M-2.1 2.4 L0 4.4 L2.1 2.4" fill="none" stroke="#222" stroke-width="1.0" stroke-linejoin="round"/></svg>
<span class="t dis" style="top:241.90px;right:361.20px;">Bomber</span>
<div class="b " style="left:553.20px;top:241.70px;width:10.20px;height:13.80px;background:#f6f6f6"></div>
<svg class="b" style="left:553.50px;top:241.70px" width="10" height="14" viewBox="-5 -7 10 14"><path d="M-2.1 -2.4 L0 -4.4 L2.1 -2.4 M-2.1 2.4 L0 4.4 L2.1 2.4" fill="none" stroke="#bebebe" stroke-width="0.8" stroke-linejoin="round"/></svg>
<span class="t " style="top:241.90px;right:256.00px;">Bomber*</span>
<div class="b spin" style="left:635.40px;top:241.90px;width:22.20px;height:12.60px;"></div>
<span class="t " style="top:244.20px;right:234.00px;">1</span>
<svg class="b" style="left:658.50px;top:241.70px" width="10" height="14" viewBox="-5 -7 10 14"><path d="M-2.1 -2.4 L0 -4.4 L2.1 -2.4 M-2.1 2.4 L0 4.4 L2.1 2.4" fill="none" stroke="#222" stroke-width="1.0" stroke-linejoin="round"/></svg>
<span class="t dis" style="top:259.90px;right:361.20px;">Strat. Bomber</span>
<div class="b " style="left:553.20px;top:259.70px;width:10.20px;height:13.80px;background:#f6f6f6"></div>
<svg class="b" style="left:553.50px;top:259.70px" width="10" height="14" viewBox="-5 -7 10 14"><path d="M-2.1 -2.4 L0 -4.4 L2.1 -2.4 M-2.1 2.4 L0 4.4 L2.1 2.4" fill="none" stroke="#bebebe" stroke-width="0.8" stroke-linejoin="round"/></svg>
<span class="t " style="top:259.90px;right:256.00px;">Strat. Bomber</span>
<div class="b spin" style="left:635.40px;top:259.90px;width:22.20px;height:12.60px;"></div>
<span class="t " style="top:262.20px;right:234.00px;">1</span>
<svg class="b" style="left:658.50px;top:259.70px" width="10" height="14" viewBox="-5 -7 10 14"><path d="M-2.1 -2.4 L0 -4.4 L2.1 -2.4 M-2.1 2.4 L0 4.4 L2.1 2.4" fill="none" stroke="#222" stroke-width="1.0" stroke-linejoin="round"/></svg>
<span class="t dis" style="top:276.20px;right:361.20px;">Kamikaze</span>
<div class="b " style="left:553.20px;top:276.00px;width:10.20px;height:13.80px;background:#f6f6f6"></div>
<svg class="b" style="left:553.50px;top:276.00px" width="10" height="14" viewBox="-5 -7 10 14"><path d="M-2.1 -2.4 L0 -4.4 L2.1 -2.4 M-2.1 2.4 L0 4.4 L2.1 2.4" fill="none" stroke="#bebebe" stroke-width="0.8" stroke-linejoin="round"/></svg>
<span class="t " style="top:276.20px;right:256.00px;">Kamikaze</span>
<div class="b spin" style="left:635.40px;top:276.20px;width:22.20px;height:12.60px;"></div>
<span class="t " style="top:278.50px;right:234.00px;">0</span>
<svg class="b" style="left:658.50px;top:276.00px" width="10" height="14" viewBox="-5 -7 10 14"><path d="M-2.1 -2.4 L0 -4.4 L2.1 -2.4 M-2.1 2.4 L0 4.4 L2.1 2.4" fill="none" stroke="#222" stroke-width="1.0" stroke-linejoin="round"/></svg>
<span class="t dis" style="top:292.40px;right:361.20px;">Naval</span>
<div class="b " style="left:553.20px;top:292.20px;width:10.20px;height:13.80px;background:#f6f6f6"></div>
<svg class="b" style="left:553.50px;top:292.20px" width="10" height="14" viewBox="-5 -7 10 14"><path d="M-2.1 -2.4 L0 -4.4 L2.1 -2.4 M-2.1 2.4 L0 4.4 L2.1 2.4" fill="none" stroke="#bebebe" stroke-width="0.8" stroke-linejoin="round"/></svg>
<span class="t " style="top:292.40px;right:256.00px;">Naval</span>
<div class="b spin" style="left:635.40px;top:292.40px;width:22.20px;height:12.60px;"></div>
<span class="t " style="top:294.70px;right:234.00px;">0</span>
<svg class="b" style="left:658.50px;top:292.20px" width="10" height="14" viewBox="-5 -7 10 14"><path d="M-2.1 -2.4 L0 -4.4 L2.1 -2.4 M-2.1 2.4 L0 4.4 L2.1 2.4" fill="none" stroke="#222" stroke-width="1.0" stroke-linejoin="round"/></svg>
<span class="t dis" style="top:308.80px;right:361.20px;">Carrier</span>
<div class="b " style="left:553.20px;top:308.60px;width:10.20px;height:13.80px;background:#f6f6f6"></div>
<svg class="b" style="left:553.50px;top:308.60px" width="10" height="14" viewBox="-5 -7 10 14"><path d="M-2.1 -2.4 L0 -4.4 L2.1 -2.4 M-2.1 2.4 L0 4.4 L2.1 2.4" fill="none" stroke="#bebebe" stroke-width="0.8" stroke-linejoin="round"/></svg>
<span class="t " style="top:308.80px;right:256.00px;">Carrier</span>
<div class="b spin" style="left:635.40px;top:308.80px;width:22.20px;height:12.60px;"></div>
<span class="t " style="top:311.10px;right:234.00px;">0</span>
<svg class="b" style="left:658.50px;top:308.60px" width="10" height="14" viewBox="-5 -7 10 14"><path d="M-2.1 -2.4 L0 -4.4 L2.1 -2.4 M-2.1 2.4 L0 4.4 L2.1 2.4" fill="none" stroke="#222" stroke-width="1.0" stroke-linejoin="round"/></svg>
<span class="t dis" style="top:325.10px;right:361.20px;">Sub</span>
<div class="b " style="left:553.20px;top:324.90px;width:10.20px;height:13.80px;background:#f6f6f6"></div>
<svg class="b" style="left:553.50px;top:324.90px" width="10" height="14" viewBox="-5 -7 10 14"><path d="M-2.1 -2.4 L0 -4.4 L2.1 -2.4 M-2.1 2.4 L0 4.4 L2.1 2.4" fill="none" stroke="#bebebe" stroke-width="0.8" stroke-linejoin="round"/></svg>
<span class="t dis" style="top:325.10px;right:256.00px;">Sub</span>
<div class="b " style="left:658.40px;top:324.90px;width:10.00px;height:13.80px;background:#f6f6f6"></div>
<svg class="b" style="left:658.50px;top:324.90px" width="10" height="14" viewBox="-5 -7 10 14"><path d="M-2.1 -2.4 L0 -4.4 L2.1 -2.4 M-2.1 2.4 L0 4.4 L2.1 2.4" fill="none" stroke="#bebebe" stroke-width="0.8" stroke-linejoin="round"/></svg>
<span class="t dis" style="top:341.20px;right:361.20px;">Transport</span>
<div class="b " style="left:553.20px;top:341.00px;width:10.20px;height:13.80px;background:#f6f6f6"></div>
<svg class="b" style="left:553.50px;top:341.00px" width="10" height="14" viewBox="-5 -7 10 14"><path d="M-2.1 -2.4 L0 -4.4 L2.1 -2.4 M-2.1 2.4 L0 4.4 L2.1 2.4" fill="none" stroke="#bebebe" stroke-width="0.8" stroke-linejoin="round"/></svg>
<span class="t " style="top:341.20px;right:256.00px;">Transport</span>
<div class="b spin" style="left:635.40px;top:341.20px;width:22.20px;height:12.60px;"></div>
<span class="t " style="top:343.50px;right:234.00px;">0</span>
<svg class="b" style="left:658.50px;top:341.00px" width="10" height="14" viewBox="-5 -7 10 14"><path d="M-2.1 -2.4 L0 -4.4 L2.1 -2.4 M-2.1 2.4 L0 4.4 L2.1 2.4" fill="none" stroke="#222" stroke-width="1.0" stroke-linejoin="round"/></svg>
<span class="t dis" style="top:357.40px;right:361.20px;">Anti-Aircraft</span>
<div class="b " style="left:553.20px;top:357.20px;width:10.20px;height:13.80px;background:#f6f6f6"></div>
<svg class="b" style="left:553.50px;top:357.20px" width="10" height="14" viewBox="-5 -7 10 14"><path d="M-2.1 -2.4 L0 -4.4 L2.1 -2.4 M-2.1 2.4 L0 4.4 L2.1 2.4" fill="none" stroke="#bebebe" stroke-width="0.8" stroke-linejoin="round"/></svg>
<span class="t " style="top:357.40px;right:256.00px;">Anti-Aircraft</span>
<div class="b spin" style="left:635.40px;top:357.40px;width:22.20px;height:12.60px;"></div>
<span class="t " style="top:359.70px;right:234.00px;">0</span>
<svg class="b" style="left:658.50px;top:357.20px" width="10" height="14" viewBox="-5 -7 10 14"><path d="M-2.1 -2.4 L0 -4.4 L2.1 -2.4 M-2.1 2.4 L0 4.4 L2.1 2.4" fill="none" stroke="#222" stroke-width="1.0" stroke-linejoin="round"/></svg>
<span class="t dis" style="top:373.80px;right:361.20px;">Resource</span>
<div class="b " style="left:553.20px;top:373.60px;width:10.20px;height:13.80px;background:#f6f6f6"></div>
<svg class="b" style="left:553.50px;top:373.60px" width="10" height="14" viewBox="-5 -7 10 14"><path d="M-2.1 -2.4 L0 -4.4 L2.1 -2.4 M-2.1 2.4 L0 4.4 L2.1 2.4" fill="none" stroke="#bebebe" stroke-width="0.8" stroke-linejoin="round"/></svg>
<span class="t dis" style="top:373.80px;right:256.00px;">Resource</span>
<div class="b " style="left:658.40px;top:373.60px;width:10.00px;height:13.80px;background:#f6f6f6"></div>
<svg class="b" style="left:658.50px;top:373.60px" width="10" height="14" viewBox="-5 -7 10 14"><path d="M-2.1 -2.4 L0 -4.4 L2.1 -2.4 M-2.1 2.4 L0 4.4 L2.1 2.4" fill="none" stroke="#bebebe" stroke-width="0.8" stroke-linejoin="round"/></svg>
<div class="b grp" style="left:679.60px;top:101.60px;width:205.70px;height:131.00px;"></div>
<span class="t glab" style="left:683.50px;top:97.40px;">General</span>
<span class="t " style="top:112.10px;right:150.00px;">Spotting (Land)</span>
<div class="b spin" style="left:742.40px;top:112.10px;width:22.40px;height:12.60px;"></div>
<span class="t " style="top:114.40px;right:126.50px;">1</span>
<svg class="b" style="left:766.00px;top:111.90px" width="10" height="14" viewBox="-5 -7 10 14"><path d="M-2.1 -2.4 L0 -4.4 L2.1 -2.4 M-2.1 2.4 L0 4.4 L2.1 2.4" fill="none" stroke="#222" stroke-width="1.0" stroke-linejoin="round"/></svg>
<span class="t " style="top:128.50px;right:150.00px;">Spotting (Naval)</span>
<div class="b spin" style="left:742.40px;top:128.50px;width:22.40px;height:12.60px;"></div>
<span class="t " style="top:130.80px;right:126.50px;">1</span>
<svg class="b" style="left:766.00px;top:128.30px" width="10" height="14" viewBox="-5 -7 10 14"><path d="M-2.1 -2.4 L0 -4.4 L2.1 -2.4 M-2.1 2.4 L0 4.4 L2.1 2.4" fill="none" stroke="#222" stroke-width="1.0" stroke-linejoin="round"/></svg>
<span class="t " style="top:145.70px;right:150.00px;">Action Points</span>
<div class="b spin" style="left:742.40px;top:145.70px;width:22.40px;height:12.60px;"></div>
<span class="t " style="top:148.00px;right:126.50px;">3</span>
<svg class="b" style="left:766.00px;top:145.50px" width="10" height="14" viewBox="-5 -7 10 14"><path d="M-2.1 -2.4 L0 -4.4 L2.1 -2.4 M-2.1 2.4 L0 4.4 L2.1 2.4" fill="none" stroke="#222" stroke-width="1.0" stroke-linejoin="round"/></svg>
<span class="t " style="top:162.20px;right:150.00px;">Operational Range</span>
<div class="b " style="left:764.00px;top:161.60px;width:13.00px;height:14.00px;background:#f2f2f2;border-left:1px solid #fafafa"></div>
<svg class="b" style="left:766.00px;top:162.00px" width="10" height="14" viewBox="-5 -7 10 14"><path d="M-2.1 -2.4 L0 -4.4 L2.1 -2.4 M-2.1 2.4 L0 4.4 L2.1 2.4" fill="none" stroke="#bebebe" stroke-width="0.8" stroke-linejoin="round"/></svg>
<span class="t " style="top:178.70px;right:150.00px;">Intercept Range</span>
<div class="b " style="left:764.00px;top:178.10px;width:13.00px;height:14.00px;background:#f2f2f2;border-left:1px solid #fafafa"></div>
<svg class="b" style="left:766.00px;top:178.50px" width="10" height="14" viewBox="-5 -7 10 14"><path d="M-2.1 -2.4 L0 -4.4 L2.1 -2.4 M-2.1 2.4 L0 4.4 L2.1 2.4" fill="none" stroke="#bebebe" stroke-width="0.8" stroke-linejoin="round"/></svg>
<span class="t " style="top:195.00px;right:150.00px;">Escort Range</span>
<div class="b " style="left:764.00px;top:194.40px;width:13.00px;height:14.00px;background:#f2f2f2;border-left:1px solid #fafafa"></div>
<svg class="b" style="left:766.00px;top:194.80px" width="10" height="14" viewBox="-5 -7 10 14"><path d="M-2.1 -2.4 L0 -4.4 L2.1 -2.4 M-2.1 2.4 L0 4.4 L2.1 2.4" fill="none" stroke="#bebebe" stroke-width="0.8" stroke-linejoin="round"/></svg>
<span class="t " style="top:211.50px;right:150.00px;">Strike Range</span>
<div class="b " style="left:764.00px;top:210.90px;width:13.00px;height:14.00px;background:#f2f2f2;border-left:1px solid #fafafa"></div>
<svg class="b" style="left:766.00px;top:211.30px" width="10" height="14" viewBox="-5 -7 10 14"><path d="M-2.1 -2.4 L0 -4.4 L2.1 -2.4 M-2.1 2.4 L0 4.4 L2.1 2.4" fill="none" stroke="#bebebe" stroke-width="0.8" stroke-linejoin="round"/></svg>
<span class="t dis" style="top:112.10px;right:46.40px;">Min Shells</span>
<div class="b " style="left:868.00px;top:111.50px;width:13.00px;height:14.00px;background:#f2f2f2;border-left:1px solid #fafafa"></div>
<svg class="b" style="left:870.00px;top:111.90px" width="10" height="14" viewBox="-5 -7 10 14"><path d="M-2.1 -2.4 L0 -4.4 L2.1 -2.4 M-2.1 2.4 L0 4.4 L2.1 2.4" fill="none" stroke="#bebebe" stroke-width="0.8" stroke-linejoin="round"/></svg>
<span class="t dis" style="top:128.50px;right:46.40px;">Max Shells</span>
<div class="b " style="left:868.00px;top:127.90px;width:13.00px;height:14.00px;background:#f2f2f2;border-left:1px solid #fafafa"></div>
<svg class="b" style="left:870.00px;top:128.30px" width="10" height="14" viewBox="-5 -7 10 14"><path d="M-2.1 -2.4 L0 -4.4 L2.1 -2.4 M-2.1 2.4 L0 4.4 L2.1 2.4" fill="none" stroke="#bebebe" stroke-width="0.8" stroke-linejoin="round"/></svg>
<span class="t " style="top:145.70px;right:46.40px;">De-Entrenchment</span>
<div class="b " style="left:868.00px;top:145.10px;width:13.00px;height:14.00px;background:#f2f2f2;border-left:1px solid #fafafa"></div>
<svg class="b" style="left:870.00px;top:145.50px" width="10" height="14" viewBox="-5 -7 10 14"><path d="M-2.1 -2.4 L0 -4.4 L2.1 -2.4 M-2.1 2.4 L0 4.4 L2.1 2.4" fill="none" stroke="#bebebe" stroke-width="0.8" stroke-linejoin="round"/></svg>
<span class="t " style="top:162.20px;right:46.40px;">De-Moralization</span>
<div class="b " style="left:868.00px;top:161.60px;width:13.00px;height:14.00px;background:#f2f2f2;border-left:1px solid #fafafa"></div>
<svg class="b" style="left:870.00px;top:162.00px" width="10" height="14" viewBox="-5 -7 10 14"><path d="M-2.1 -2.4 L0 -4.4 L2.1 -2.4 M-2.1 2.4 L0 4.4 L2.1 2.4" fill="none" stroke="#bebebe" stroke-width="0.8" stroke-linejoin="round"/></svg>
<span class="t " style="top:178.70px;right:46.40px;">Interceptions</span>
<div class="b " style="left:868.00px;top:178.10px;width:13.00px;height:14.00px;background:#f2f2f2;border-left:1px solid #fafafa"></div>
<svg class="b" style="left:870.00px;top:178.50px" width="10" height="14" viewBox="-5 -7 10 14"><path d="M-2.1 -2.4 L0 -4.4 L2.1 -2.4 M-2.1 2.4 L0 4.4 L2.1 2.4" fill="none" stroke="#bebebe" stroke-width="0.8" stroke-linejoin="round"/></svg>
<span class="t " style="top:195.00px;right:46.40px;">Escorts</span>
<div class="b " style="left:868.00px;top:194.40px;width:13.00px;height:14.00px;background:#f2f2f2;border-left:1px solid #fafafa"></div>
<svg class="b" style="left:870.00px;top:194.80px" width="10" height="14" viewBox="-5 -7 10 14"><path d="M-2.1 -2.4 L0 -4.4 L2.1 -2.4 M-2.1 2.4 L0 4.4 L2.1 2.4" fill="none" stroke="#bebebe" stroke-width="0.8" stroke-linejoin="round"/></svg>
<span class="t " style="top:211.50px;right:46.40px;">Strikes</span>
<div class="b " style="left:868.00px;top:210.90px;width:13.00px;height:14.00px;background:#f2f2f2;border-left:1px solid #fafafa"></div>
<svg class="b" style="left:870.00px;top:211.30px" width="10" height="14" viewBox="-5 -7 10 14"><path d="M-2.1 -2.4 L0 -4.4 L2.1 -2.4 M-2.1 2.4 L0 4.4 L2.1 2.4" fill="none" stroke="#bebebe" stroke-width="0.8" stroke-linejoin="round"/></svg>
<div class="b grp" style="left:679.60px;top:241.40px;width:205.70px;height:35.20px;"></div>
<span class="t glab" style="left:683.50px;top:237.20px;">Loss Evasion - Land Combat</span>
<span class="t " style="top:256.60px;right:149.70px;">% Attacking</span>
<div class="b " style="left:764.00px;top:256.50px;width:13.00px;height:14.00px;background:#f2f2f2;border-left:1px solid #fafafa"></div>
<svg class="b" style="left:765.80px;top:256.60px" width="10" height="14" viewBox="-5 -7 10 14"><path d="M-2.1 -2.4 L0 -4.4 L2.1 -2.4 M-2.1 2.4 L0 4.4 L2.1 2.4" fill="none" stroke="#bebebe" stroke-width="0.8" stroke-linejoin="round"/></svg>
<span class="t " style="top:258.20px;right:44.60px;">% Defending</span>
<div class="b spin" style="left:846.40px;top:258.00px;width:22.50px;height:13.20px;"></div>
<span class="t " style="top:260.60px;right:22.40px;">0</span>
<svg class="b" style="left:870.20px;top:257.80px" width="10" height="14" viewBox="-5 -7 10 14"><path d="M-2.1 -2.4 L0 -4.4 L2.1 -2.4 M-2.1 2.4 L0 4.4 L2.1 2.4" fill="none" stroke="#222" stroke-width="1.0" stroke-linejoin="round"/></svg>
<div class="b grp" style="left:679.60px;top:285.20px;width:205.70px;height:35.20px;"></div>
<span class="t glab" style="left:684.60px;top:281.00px;">Loss Evasion - Naval Combat</span>
<span class="t " style="top:298.90px;right:149.70px;">% Attacking</span>
<div class="b " style="left:764.00px;top:298.00px;width:13.00px;height:14.00px;background:#f2f2f2;border-left:1px solid #fafafa"></div>
<svg class="b" style="left:765.80px;top:298.00px" width="10" height="14" viewBox="-5 -7 10 14"><path d="M-2.1 -2.4 L0 -4.4 L2.1 -2.4 M-2.1 2.4 L0 4.4 L2.1 2.4" fill="none" stroke="#bebebe" stroke-width="0.8" stroke-linejoin="round"/></svg>
<span class="t " style="top:298.90px;right:44.60px;">% Defending</span>
<div class="b spin" style="left:846.40px;top:298.80px;width:22.50px;height:13.50px;"></div>
<span class="t " style="top:301.20px;right:22.40px;">0</span>
<svg class="b" style="left:870.20px;top:298.60px" width="10" height="14" viewBox="-5 -7 10 14"><path d="M-2.1 -2.4 L0 -4.4 L2.1 -2.4 M-2.1 2.4 L0 4.4 L2.1 2.4" fill="none" stroke="#222" stroke-width="1.0" stroke-linejoin="round"/></svg>
<div class="b grp" style="left:679.60px;top:329.00px;width:205.70px;height:40.60px;"></div>
<span class="t glab" style="left:683.50px;top:324.80px;">Extra</span>
<span class="t " style="top:340.80px;right:150.00px;color:#fbfbfb;">Raid Multiplier</span>
<span class="t " style="top:348.90px;right:150.00px;color:#fbfbfb;">(MPP)</span>
<div class="b " style="left:764.00px;top:342.00px;width:13.00px;height:14.00px;background:#f2f2f2;border-left:1px solid #fafafa"></div>
<svg class="b" style="left:765.80px;top:342.00px" width="10" height="14" viewBox="-5 -7 10 14"><path d="M-2.1 -2.4 L0 -4.4 L2.1 -2.4 M-2.1 2.4 L0 4.4 L2.1 2.4" fill="none" stroke="#bebebe" stroke-width="0.8" stroke-linejoin="round"/></svg>
<span class="t " style="top:339.60px;right:43.30px;">Enemy NM Losses</span>
<span class="t " style="top:347.60px;right:43.30px;">(Per Raid)</span>
<div class="b " style="left:868.00px;top:342.00px;width:13.00px;height:14.00px;background:#f2f2f2;border-left:1px solid #fafafa"></div>
<svg class="b" style="left:870.00px;top:342.00px" width="10" height="14" viewBox="-5 -7 10 14"><path d="M-2.1 -2.4 L0 -4.4 L2.1 -2.4 M-2.1 2.4 L0 4.4 L2.1 2.4" fill="none" stroke="#bebebe" stroke-width="0.8" stroke-linejoin="round"/></svg>
<div class="b grp" style="left:679.60px;top:377.60px;width:205.70px;height:47.20px;"></div>
<span class="t glab" style="left:683.50px;top:373.40px;">Target Type</span>
<div class="b " style="left:688.50px;top:393.70px;width:187.50px;height:13.00px;background:#fff;border:1px solid #d2d2d2"></div>
<div class="b " style="left:690.20px;top:395.30px;width:173.30px;height:9.80px;background:#f3f3f3"></div>
<svg class="b" style="left:865.7px;top:396px" width="9" height="8" viewBox="0 0 9 8"><path d="M2 2.8 L4.5 5.3 L7 2.8" fill="none" stroke="#bdbdbd" stroke-width="0.8"/></svg>
<svg class="b" style="left:0;top:0" width="888" height="519" viewBox="0 0 888 519">
<g fill="none" stroke="#ecd028">
<ellipse cx="75.5" cy="4.3" rx="24.7" ry="7.9" stroke-width="1.9"/>
<ellipse cx="180.5" cy="21" rx="31.6" ry="8.2" stroke-width="1.9"/>
<ellipse cx="291.6" cy="83.3" rx="40" ry="8.5" stroke-width="1.9"/>
<ellipse cx="231.3" cy="467.5" rx="30.4" ry="9.4" stroke-width="2"/>
<ellipse cx="766" cy="296" rx="124" ry="90" stroke-width="6" stroke="#f6d11f"/>
</g>
<path d="M72.5 22.7 L139.2 27.4 M128.1 21.3 L139.2 27.4 L127.4 31.9" stroke="#e01014" stroke-width="2.2" fill="none" stroke-linecap="round" stroke-linejoin="round"/>
<path d="M167.2 39.8 L218 448.3 M221.1 435.8 L218 448.3 L212.0 437.0" stroke="#e01014" stroke-width="2.2" fill="none" stroke-linecap="round" stroke-linejoin="round"/>
<path d="M236 438 L286.8 96 M280.5 107.2 L286.8 96 L289.6 108.5" stroke="#e01014" stroke-width="2.2" fill="none" stroke-linecap="round" stroke-linejoin="round"/>
<path d="M322.3 100.3 L670.2 292.4 M662.5 282.5 L670.2 292.4 L657.7 291.2" stroke="#e01014" stroke-width="2.2" fill="none" stroke-linecap="round" stroke-linejoin="round"/>
</svg>
</body></html>
